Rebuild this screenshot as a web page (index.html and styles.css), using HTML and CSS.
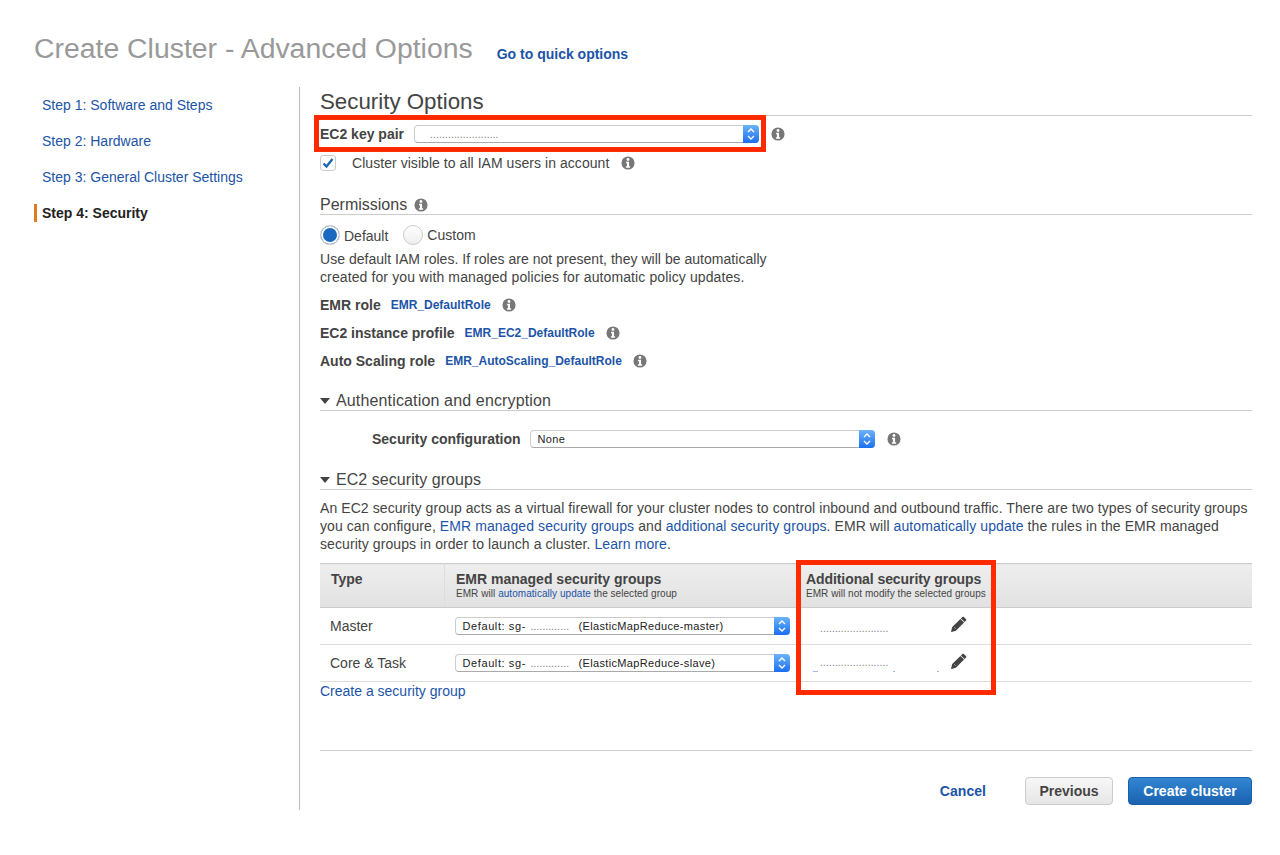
FILE: index.html
```html
<!DOCTYPE html>
<html lang="en">
<head>
  <meta charset="UTF-8" />
  <title>Create Cluster - Advanced Options</title>
  <link rel="stylesheet" href="styles.css">
</head>
<body>
  <svg class="sprite" width="0" height="0">
    <symbol id="info" viewBox="0 0 16 16">
      <circle cx="8" cy="8" r="7.5" fill="#777"/>
      <circle cx="8" cy="4" r="1.6" fill="#fff"/>
      <path d="M5.8 6.6h3.4v5.2h1.2v1.6H5.6v-1.6h1.2V8.2h-1z" fill="#fff"/>
    </symbol>
    <symbol id="pencil" viewBox="0 0 16 16">
      <path d="M11.4.9a1 1 0 0 1 1.4 0l2.3 2.3a1 1 0 0 1 0 1.4l-1.5 1.5-3.7-3.7zM9.4 2.9l3.7 3.7-8.2 8.2L.6 15.9a.4.4 0 0 1-.5-.5l1.1-4.3z" fill="#444"/>
      <path d="M3 11l2 2" stroke="#999" stroke-width=".8"/>
    </symbol>
    <symbol id="stepper" viewBox="0 0 16 18">
      <path d="M5 7l3-3 3 3M5 11l3 3 3-3" fill="none" stroke="#fff" stroke-width="1.4"/>
    </symbol>
  </svg>

  <header class="page-head">
    <h1>Create Cluster - Advanced Options</h1>
    <a href="#" class="quick-link">Go to quick options</a>
  </header>

  <div class="layout">
    <nav class="steps">
      <a href="#">Step 1: Software and Steps</a>
      <a href="#">Step 2: Hardware</a>
      <a href="#">Step 3: General Cluster Settings</a>
      <a href="#" class="current">Step 4: Security</a>
    </nav>

    <main class="content">
      <h2>Security Options</h2>

      <div class="key-row">
        <label>EC2 key pair</label>
        <div class="select key-select">
          <span class="dots">.......................</span>
          <span class="stepper"><svg width="16" height="18"><use href="#stepper"/></svg></span>
        </div>
        <svg class="info" width="14" height="14"><use href="#info"/></svg>
      </div>

      <div class="check-row">
        <span class="checkbox">
          <svg width="12" height="12" viewBox="0 0 12 12"><path d="M1.5 6.5l3 3 6-7.5" fill="none" stroke="#1a68b8" stroke-width="2.4"/></svg>
        </span>
        <span>Cluster visible to all IAM users in account</span>
        <svg class="info" width="14" height="14"><use href="#info"/></svg>
      </div>

      <h3 class="sub-head perm-head">Permissions <svg class="info" width="14" height="14"><use href="#info"/></svg></h3>

      <div class="radio-row">
        <span class="radio on"></span><span class="radio-text first">Default</span>
        <span class="radio"></span><span class="radio-text">Custom</span>
      </div>
      <p class="perm-text">Use default IAM roles. If roles are not present, they will be automatically<br><span class="perm-line">created for you with managed policies for automatic policy updates.</span></p>

      <div class="role-list">
        <div class="role"><b>EMR role</b><a href="#">EMR_DefaultRole</a><svg class="info" width="14" height="14"><use href="#info"/></svg></div>
        <div class="role"><b>EC2 instance profile</b><a href="#">EMR_EC2_DefaultRole</a><svg class="info" width="14" height="14"><use href="#info"/></svg></div>
        <div class="role"><b>Auto Scaling role</b><a href="#">EMR_AutoScaling_DefaultRole</a><svg class="info" width="14" height="14"><use href="#info"/></svg></div>
      </div>

      <h3 class="sub-head auth-head"><span class="caret"></span>Authentication and encryption</h3>

      <div class="config-row">
        <label>Security configuration</label>
        <div class="select config-select">
          <span class="select-text">None</span>
          <span class="stepper"><svg width="16" height="18"><use href="#stepper"/></svg></span>
        </div>
        <svg class="info" width="14" height="14"><use href="#info"/></svg>
      </div>

      <h3 class="sub-head groups-head"><span class="caret"></span>EC2 security groups</h3>

      <p class="groups-text">An EC2 security group acts as a virtual firewall for your cluster nodes to control inbound and outbound traffic. There are two types of security groups you can configure, <a href="#">EMR managed security groups</a> and <a href="#">additional security groups</a>. EMR will <a href="#">automatically update</a> the rules in the EMR managed security groups in order to launch a cluster. <a href="#">Learn more</a>.</p>

      <table class="groups">
        <thead>
          <tr>
            <th class="col-type">Type</th>
            <th class="col-emr">EMR managed security groups<small>EMR will <a href="#">automatically update</a> the selected group</small></th>
            <th class="col-extra">Additional security groups<small>EMR will not modify the selected groups</small></th>
          </tr>
        </thead>
        <tbody>
          <tr>
            <td>Master</td>
            <td>
              <div class="select group-select">
                <span class="select-text"><span class="sg">Default: sg-</span><span class="gap">.............</span>(ElasticMapReduce-master)</span>
                <span class="stepper"><svg width="16" height="18"><use href="#stepper"/></svg></span>
              </div>
            </td>
            <td>
              <div class="extra"><span class="dots">.......................</span><svg width="16" height="16"><use href="#pencil"/></svg></div>
            </td>
          </tr>
          <tr>
            <td>Core &amp; Task</td>
            <td>
              <div class="select group-select">
                <span class="select-text"><span class="sg">Default: sg-</span><span class="gap">.............</span>(ElasticMapReduce-slave)</span>
                <span class="stepper"><svg width="16" height="18"><use href="#stepper"/></svg></span>
              </div>
            </td>
            <td>
              <div class="extra raised"><span class="dots">.......................</span><svg width="16" height="16"><use href="#pencil"/></svg><i class="specks"></i></div>
            </td>
          </tr>
        </tbody>
      </table>

      <a href="#" class="create-group">Create a security group</a>

      <div class="actions">
        <a href="#" class="cancel">Cancel</a>
        <button class="btn">Previous</button>
        <button class="btn primary">Create cluster</button>
      </div>
    </main>
  </div>

  <div class="mark mark-key"></div>
  <div class="mark mark-extra"></div>
</body>
</html>
```

FILE: styles.css
```css
body {
  margin: 0;
  font-family: "Liberation Sans", Arial, sans-serif;
  font-size: 14px;
  color: #444;
  background: #fff;
}

a {
  color: #1c54a8;
  text-decoration: none;
}

.sprite {
  position: absolute;
}

.page-head {
  display: flex;
  align-items: baseline;
  height: 87px;
  box-sizing: border-box;
  padding: 31px 0 0 34px;
}

h1 {
  margin: 0;
  font-size: 28.4px;
  line-height: 34px;
  font-weight: normal;
  color: #999;
}

.quick-link {
  margin-left: 24px;
  font-weight: bold;
  position: relative;
  top: 1px;
}

.layout {
  display: flex;
}

.steps {
  width: 299px;
  height: 723px;
  border-right: 1px solid #bbb;
  flex: none;
}

.steps a {
  display: block;
  margin: 9px 0 0 34px;
  padding-left: 8px;
  height: 27px;
  line-height: 18px;
}

.steps a.current {
  height: 18px;
  border-left: 3px solid #e07b1f;
  padding-left: 5px;
  font-weight: bold;
  color: #222;
}

.content {
  width: 932px;
  margin-left: 20px;
}

h2 {
  margin: 0;
  height: 27px;
  padding-top: 1px;
  line-height: 27px;
  font-size: 22.3px;
  font-weight: normal;
  border-bottom: 1px solid #ccc;
}

.key-row {
  display: flex;
  align-items: center;
  height: 36px;
}

.key-row label,
.config-row label {
  font-weight: bold;
}

.select {
  display: flex;
  align-items: center;
  justify-content: space-between;
  height: 18px;
  box-sizing: border-box;
  background: #fff;
  border: 1px solid #ccc;
  border-bottom-color: #aaa;
  border-radius: 4px;
  font-size: 11px;
  letter-spacing: .35px;
  color: #222;
}

.stepper {
  display: block;
  width: 16px;
  height: 18px;
  margin: -1px -1px -1px 0;
  background: linear-gradient(#6cb3fa, #1a6ff0);
  border-radius: 0 4px 4px 0;
}

.stepper svg {
  display: block;
}

.key-select {
  width: 345px;
  margin: 0 1px 0 10px;
}

.dots {
  color: #777;
  font-size: 10px;
  letter-spacing: .2px;
  line-height: 12px;
}

.key-select .dots {
  margin-left: 15px;
  padding-top: 1px;
}

.select-text {
  margin-left: 7px;
}

.info {
  flex: none;
}

.key-row .info {
  margin-left: 11px;
}

.check-row {
  display: flex;
  align-items: center;
  height: 22px;
  letter-spacing: .05px;
}

.checkbox {
  display: flex;
  align-items: center;
  justify-content: center;
  width: 16px;
  height: 16px;
  box-sizing: border-box;
  border: 1px solid #ccc;
  border-radius: 3px;
  margin-right: 16px;
}

.check-row .info {
  margin-left: 12px;
}

.sub-head {
  margin: 0;
  height: 19px;
  padding-top: 1px;
  line-height: 19px;
  font-size: 16px;
  font-weight: normal;
  border-bottom: 1px solid #ccc;
  display: flex;
  align-items: center;
}

.perm-head {
  margin-top: 20px;
}

.perm-head .info {
  margin-left: 7px;
}

.caret {
  width: 0;
  height: 0;
  border-left: 5.5px solid transparent;
  border-right: 5.5px solid transparent;
  border-top: 6px solid #444;
  margin-right: 5px;
}

.radio-row {
  display: flex;
  align-items: center;
  height: 30px;
  margin-top: 5px;
}

.radio {
  width: 20px;
  height: 20px;
  box-sizing: border-box;
  border: 1px solid #ccc;
  border-radius: 50%;
  background: linear-gradient(#fff, #eee);
}

.radio.on {
  background: #1a68c0;
  box-shadow: inset 0 0 0 2px #fff;
}

.radio-text {
  margin-left: 4px;
}

.radio-text.first {
  margin-right: 15px;
  padding-top: 2px;
}

.perm-text {
  margin: 0;
  line-height: 18px;
  letter-spacing: .03px;
}

.perm-line {
  letter-spacing: .11px;
}

.role-list {
  margin-top: 5px;
}

.role {
  display: flex;
  align-items: center;
  height: 28px;
}

.role a {
  margin-left: 10px;
  font-size: 12px;
  font-weight: bold;
}

.role .info {
  margin-left: 11px;
}

.auth-head {
  margin-top: 15px;
  letter-spacing: .15px;
}

.config-row {
  display: flex;
  align-items: center;
  height: 28px;
  margin-top: 14px;
  padding-left: 52px;
}

.config-select {
  width: 345px;
  margin-left: 9px;
}

.config-row .info {
  margin-left: 12px;
}

.groups-head {
  margin-top: 16px;
  letter-spacing: .05px;
}

.caret {
  margin-right: 6px;
}

.groups-text {
  margin: 9px 0 0;
  line-height: 18px;
  letter-spacing: .08px;
}

.groups {
  width: 100%;
  margin-top: 10px;
  border-collapse: collapse;
  table-layout: fixed;
}

.groups th {
  height: 43px;
  padding: 0 0 0 11px;
  text-align: left;
  font-size: 14px;
  line-height: 17px;
  background: linear-gradient(#eee, #e1e1e1);
  border-top: 1px solid #ccc;
  border-bottom: 1px solid #ccc;
}

.groups th.col-type {
  width: 113px;
  height: 36px;
  padding-top: 7px;
  vertical-align: top;
  border-right: 1px solid #ddd;
}

.col-emr {
  width: 339px;
}

.col-extra {
  letter-spacing: -.08px;
}

.groups small {
  display: block;
  font-size: 10px;
  line-height: 12px;
  letter-spacing: .05px;
  font-weight: normal;
}

.groups td {
  height: 36px;
  padding: 0 0 0 11px;
  border-bottom: 1px solid #ddd;
}

.groups td:first-child {
  padding-left: 10px;
}

.group-select {
  width: 335px;
  margin-left: -1px;
}

.sg {
  display: inline-block;
  width: 68px;
  letter-spacing: .6px;
}

.gap {
  display: inline-block;
  width: 48px;
  color: #777;
  font-size: 10px;
  letter-spacing: .2px;
}

.extra {
  position: relative;
  display: flex;
  align-items: flex-start;
  height: 20px;
}

.extra .dots {
  width: 131px;
  padding: 7px 0 0 14px;
}

.extra.raised .dots {
  padding-top: 4px;
}

/* leftover bits of a blanked-out link under the second row */
.specks {
  position: absolute;
  left: 7px;
  top: 18px;
  width: 130px;
  height: 1px;
  background: linear-gradient(to right, #9db8ea 0 5px, transparent 5px 80px, #9db8ea 80px 82px, transparent 82px 124px, #9db8ea 124px 126px, transparent 126px);
}

.create-group {
  display: block;
  height: 18px;
  line-height: 18px;
}

.actions {
  display: flex;
  justify-content: flex-end;
  align-items: center;
  margin-top: 50px;
  padding-top: 26px;
  border-top: 1px solid #ccc;
}

.cancel {
  font-weight: bold;
  margin-right: 39px;
  letter-spacing: .05px;
}

.btn {
  height: 28px;
  padding: 0;
  width: 88px;
  border: 1px solid #ccc;
  border-radius: 4px;
  background: linear-gradient(#f7f7f7, #e6e6e6);
  font-family: inherit;
  font-size: 14px;
  font-weight: bold;
  color: #444;
}

.btn.primary {
  width: 124px;
  margin-left: 15px;
  border-color: #1a5fa8;
  background: linear-gradient(#3286d2, #1a62b0);
  color: #fff;
}

/* red annotation boxes drawn on top of the screenshot */
.mark {
  position: absolute;
  box-sizing: border-box;
  border: 5px solid #ff2a00;
}

.mark-key {
  left: 314px;
  top: 115px;
  width: 452px;
  height: 37px;
}

.mark-extra {
  left: 796px;
  top: 560px;
  width: 200px;
  height: 135px;
}
```
